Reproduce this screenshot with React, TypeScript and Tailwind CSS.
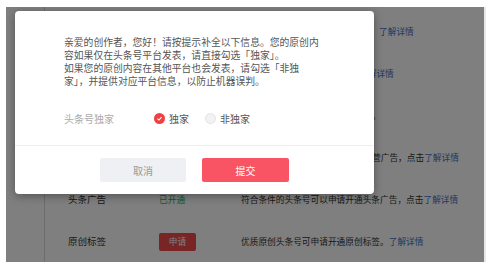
import type { ReactNode } from "react";

const font = { fontFamily: '"Noto Sans CJK SC", "Liberation Sans", sans-serif' };

type Row = {
  label?: string;
  status?: ReactNode;
  text: string;
  link?: boolean;
  // where the description starts, behind the dialog the start is hidden anyway
  indent?: string;
};

const rows: Row[] = [
  { text: "", link: true, indent: "ml-[138px]" },
  { text: "", link: true, indent: "ml-[118px]" },
  { text: "。", indent: "ml-[131px]" },
  { text: "营广告，点击", link: true, indent: "ml-[131px]" },
  {
    label: "头条广告",
    status: <span className="text-[#2fb344]">已开通</span>,
    text: "符合条件的头条号可以申请开通头条广告，点击",
    link: true,
  },
  {
    label: "原创标签",
    status: (
      <span className="flex h-[18px] w-[37px] items-center justify-center rounded-[2px] bg-[#f04a4a] text-white">
        申请
      </span>
    ),
    text: "优质原创头条号可申请开通原创标签。",
    link: true,
  },
];

function Radio({ checked, label }: { checked?: boolean; label: string }) {
  return (
    <span className="flex items-center gap-[4px]">
      {checked ? (
        <span className="flex h-[11px] w-[11px] items-center justify-center rounded-full bg-[#f04142]">
          <svg viewBox="0 0 10 10" className="h-[7px] w-[7px]">
            <path d="M2 5.2 L4.2 7.2 L8 3" fill="none" stroke="#fff" strokeWidth="1.6" />
          </svg>
        </span>
      ) : (
        <span className="h-[11px] w-[11px] rounded-full border border-[#e3e3e3] bg-[#f2f2f2]" />
      )}
      <span className="text-[#555]">{label}</span>
    </span>
  );
}

export default function App() {
  return (
    <div className="h-[270px] w-[500px] bg-white pl-[6px] pt-[7px]" style={font}>
      <div className="relative h-[255px] w-[480px] overflow-hidden border-r-[2px] border-[#e8e8e8] bg-white">
        <div className="flex h-full">
          <div className="w-[39px] shrink-0 border-r border-[#d9d9d9]" />
          <div className="flex-1 pt-[4px] text-[8.7px] leading-none text-[#333]">
            {rows.map((row, i) => (
              <div key={i} className="flex h-[42px] items-center">
                <span className="w-[110px] shrink-0 pl-[23px] text-[9.5px]">{row.label}</span>
                <span className="flex w-[86px] shrink-0 items-center pl-[4px]">{row.status}</span>
                <span className={`whitespace-nowrap ${row.indent ?? ""}`}>
                  {row.text}
                  {row.link && <span className="text-[#3f6fc4]">了解详情</span>}
                </span>
              </div>
            ))}
          </div>
        </div>

        <div className="absolute inset-0 bg-black/50" />

        <div className="absolute left-[9px] top-[4px] flex h-[183px] w-[359px] flex-col rounded-[4px] bg-white shadow-[0_2px_10px_rgba(0,0,0,0.35)]">
          <div className="pl-[49px] pt-[25px] text-[9.8px] leading-[13px] text-[#555]">
            <p className="whitespace-nowrap">亲爱的创作者，您好！请按提示补全以下信息。您的原创内</p>
            <p className="whitespace-nowrap">容如果仅在头条号平台发表，请直接勾选「独家」。</p>
            <p className="whitespace-nowrap">如果您的原创内容在其他平台也会发表，请勾选「非独</p>
            <p className="whitespace-nowrap">家」，并提供对应平台信息，以防止机器误判。</p>
          </div>
          <div className="mt-[20px] flex h-[20px] items-center pl-[49px] text-[10px]">
            <span className="w-[90px] text-[#aaa]">头条号独家</span>
            <span className="flex items-center gap-[16px]">
              <Radio checked label="独家" />
              <Radio label="非独家" />
            </span>
          </div>
          <div className="mt-[17px] h-px bg-[#eeeeee]" />
          <div className="flex flex-1 items-start justify-center gap-[16px] pt-[12px] text-[10px]">
            <button className="h-[24px] w-[86px] rounded-[2px] bg-[#eef0f3] text-[#999]">取消</button>
            <button className="h-[24px] w-[87px] rounded-[2px] bg-[#f85463] text-white">提交</button>
          </div>
        </div>
      </div>
    </div>
  );
}
